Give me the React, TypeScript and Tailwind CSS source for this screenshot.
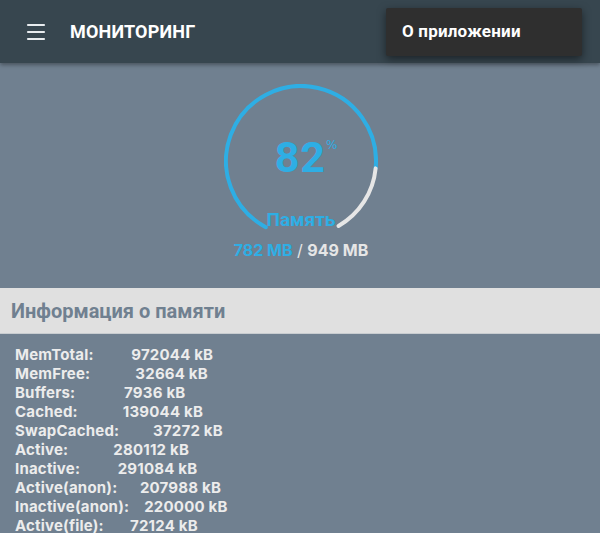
import { Menu } from 'lucide-react'

const rows = [
  ['MemTotal:', '972044'],
  ['MemFree:', '32664'],
  ['Buffers:', '7936'],
  ['Cached:', '139044'],
  ['SwapCached:', '37272'],
  ['Active:', '280112'],
  ['Inactive:', '291084'],
  ['Active(anon):', '207988'],
  ['Inactive(anon):', '220000'],
  ['Active(file):', '72124'],
]

// /proc/meminfo style: label padded to 16 chars, value right-aligned in 8
function line(label: string, value: string) {
  return label.padEnd(16, ' ') + ' ' + value.padStart(8, ' ') + ' kB'
}

function Gauge() {
  const cx = 77
  const cy = 77
  const r = 75
  const start = 118
  const span = 302
  const pct = 0.82
  const pt = (deg: number) => {
    const a = (deg * Math.PI) / 180
    return [cx + r * Math.cos(a), cy + r * Math.sin(a)]
  }
  const arc = (a0: number, a1: number) => {
    const [x0, y0] = pt(a0)
    const [x1, y1] = pt(a1)
    const large = a1 - a0 > 180 ? 1 : 0
    return `M ${x0} ${y0} A ${r} ${r} 0 ${large} 1 ${x1} ${y1}`
  }
  const mid = start + span * pct
  return (
    <svg width="154" height="154" viewBox="0 0 154 154" className="absolute left-0 top-0">
      <path d={arc(start, mid)} fill="none" stroke="#2eaee4" strokeWidth="4" strokeLinecap="round" />
      <path d={arc(mid, start + span)} fill="none" stroke="#e6e6e6" strokeWidth="4" strokeLinecap="round" />
    </svg>
  )
}

export default function App() {
  return (
    <div className="w-[600px] h-[533px] overflow-hidden bg-[#708090] relative" style={{ fontFamily: 'Roboto, "Noto Sans", sans-serif' }}>
      <header className="h-[63px] bg-[#37464f] flex items-center shadow-[0_2px_4px_rgba(0,0,0,0.35)] relative z-10">
        <div className="w-[70px] flex justify-center pl-[2px]">
          <Menu size={24} color="#e8ecef" strokeWidth={2.2} />
        </div>
        <h1 className="text-white font-bold text-[18px] tracking-[0.2px]">МОНИТОРИНГ</h1>
      </header>

      <div className="absolute left-[386px] top-[8px] w-[196px] h-[48px] bg-[#2f2f2f] rounded-[2px] shadow-[0_3px_8px_rgba(0,0,0,0.5)] z-20 flex items-center pl-[16px]">
        <span className="text-white font-bold text-[17px] tracking-[0.2px]">О приложении</span>
      </div>

      <section className="h-[225px] flex flex-col items-center pt-[21px] pl-[2px]">
        <div className="relative w-[154px] h-[154px]">
          <Gauge />
          <div className="absolute inset-0 flex flex-col items-center">
            <div className="mt-[52px] ml-[10px] flex items-start text-[#2eaee4] font-bold leading-none">
              <span className="text-[43px] tracking-[1px]">82</span>
              <span className="text-[12px] mt-[3px] font-medium" style={{ fontFamily: '"DejaVu Sans", sans-serif' }}>%</span>
            </div>
            <div className="mt-[31px] text-[#2eaee4] font-bold text-[19px] leading-none">Память</div>
          </div>
        </div>
        <div className="mt-[4px] text-[16px] font-bold leading-none" style={{ fontFamily: 'Inter, Roboto, sans-serif' }}>
          <span className="text-[#2eaee4]">782 MB</span>
          <span className="text-[#e6e6e6] font-normal"> / </span>
          <span className="text-[#e6e6e6]">949 MB</span>
        </div>
      </section>

      <div className="h-[46px] bg-[#e0e0e0] border-b border-[#c8ccd0] flex items-center pl-[11px]">
        <h2 className="text-[#708090] font-bold text-[20px]">Информация о памяти</h2>
      </div>

      <pre className="pl-[15px] pt-[11px] text-[#ececec] font-bold text-[15px] leading-[19px] tracking-[0.2px]" style={{ fontFamily: 'Inter, Roboto, sans-serif' }}>
        {rows.map(([l, v]) => line(l, v)).join('\n')}
      </pre>
    </div>
  )
}
